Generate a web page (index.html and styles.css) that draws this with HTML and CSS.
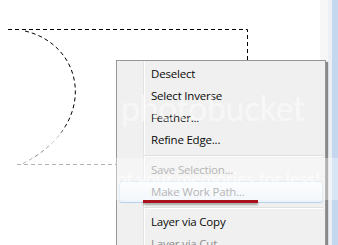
FILE: index.html
```html
<!DOCTYPE html>
<html>
<head>
<meta charset="utf-8">
<link rel="stylesheet" href="styles.css">
</head>
<body>
<div class="screen">
  <div class="canvas">
    <svg class="marquee" width="320" height="245" viewBox="0 0 320 245">
      <defs>
        <linearGradient id="fade" gradientUnits="userSpaceOnUse" x1="0" y1="30" x2="0" y2="166">
          <stop offset="0" stop-color="#000"/>
          <stop offset="0.7" stop-color="#000"/>
          <stop offset="0.8" stop-color="#ddd"/>
          <stop offset="0.9" stop-color="#888"/>
          <stop offset="1" stop-color="#888"/>
        </linearGradient>
      </defs>
      <path d="M8 29.5 H247.5 V60" fill="none" stroke="#000" stroke-width="1" stroke-dasharray="4 3"/>
      <path d="M25 31 C85 45 100 125 22 164" fill="none" stroke="url(#fade)" stroke-width="1" stroke-dasharray="4 3"/>
      <path d="M17 164.5 H116" fill="none" stroke="#8a8a8a" stroke-width="1" stroke-dasharray="4 3"/>
    </svg>
  </div>
  <div class="scrollbar">
    <div class="strip strip-a"></div>
    <div class="strip strip-b"></div>
    <div class="strip strip-c"></div>
  </div>

  <div class="menu">
    <div class="item">Deselect</div>
    <div class="item">Select Inverse</div>
    <div class="item">Feather...</div>
    <div class="item">Refine Edge...</div>
    <div class="sep"></div>
    <div class="item disabled">Save Selection...</div>
    <div class="item disabled hover">Make Work Path...</div>
    <div class="sep"></div>
    <div class="item">Layer via Copy</div>
    <div class="item disabled">Layer via Cut</div>
  </div>

  <div class="wm-band"></div>
  <div class="wm-logo">photobucket</div>
  <div class="wm-tag">Protect more of your memories for less!</div>
  <div class="annot"></div>
</div>
</body>
</html>
```

FILE: styles.css
```css
html, body {
  margin: 0;
  padding: 0;
  background: #fff;
}

.screen {
  position: relative;
  width: 338px;
  height: 245px;
  overflow: hidden;
  display: flex;
  font-family: "Open Sans", "Noto Sans", sans-serif;
}

.canvas {
  flex: 1;
  background: #fff;
}

.marquee {
  display: block;
}

.scrollbar {
  display: flex;
  width: 18px;
}

.strip-a {
  width: 8px;
  background: #f7f7f7;
}

.strip-b {
  width: 4px;
  background: #eceff3;
}

.strip-c {
  flex: 1;
  background: #c4d7ee;
}

.menu {
  position: absolute;
  left: 116px;
  top: 60px;
  width: 210px;
  height: 200px;
  box-sizing: border-box;
  padding: 2px;
  background-color: #f0f0f0;
  background-image: linear-gradient(to right, transparent 0, transparent 26px, #e2e3e3 26px, #e2e3e3 27px, #ffffff 27px, #ffffff 28px, transparent 28px);
  border: 1px solid #979797;
  box-shadow: 2px 2px 1px rgba(0, 0, 0, 0.45);
}

.item {
  height: 22px;
  line-height: 22px;
  padding-left: 32px;
  font-size: 11.5px;
  letter-spacing: -0.2px;
  color: #0a0a0a;
  box-sizing: border-box;
  white-space: nowrap;
}

.item.disabled {
  color: #8d8d8d;
}

.item.hover {
  border: 1px solid #d5e3f0;
  border-bottom-color: #b9d1e8;
  border-radius: 3px;
  line-height: 20px;
  padding-left: 31px;
  background: linear-gradient(to bottom, #fafcfe, #eef4fa);
}

.sep {
  height: 1px;
  margin: 4px 0 2px 25px;
  background: #e0e0e0;
  border-bottom: 1px solid #ffffff;
}

.wm-band {
  position: absolute;
  left: 0;
  top: 158px;
  width: 338px;
  height: 42px;
  background: rgba(255, 255, 255, 0.35);
}

.wm-logo {
  position: absolute;
  left: 121px;
  top: 88px;
  font-family: "Lato", "Open Sans", sans-serif;
  font-size: 34px;
  line-height: 40px;
  letter-spacing: -0.5px;
  color: rgba(255, 255, 255, 0.55);
  white-space: nowrap;
}

.wm-tag {
  position: absolute;
  right: 18px;
  top: 167px;
  font-family: "Lato", "Open Sans", sans-serif;
  font-size: 18px;
  line-height: 22px;
  color: rgba(255, 255, 255, 0.65);
  white-space: nowrap;
}

.annot {
  position: absolute;
  left: 143px;
  top: 200px;
  width: 115px;
  height: 3px;
  background: #a8121c;
  box-shadow: 0 2px 2px rgba(0, 0, 0, 0.3);
}
```
